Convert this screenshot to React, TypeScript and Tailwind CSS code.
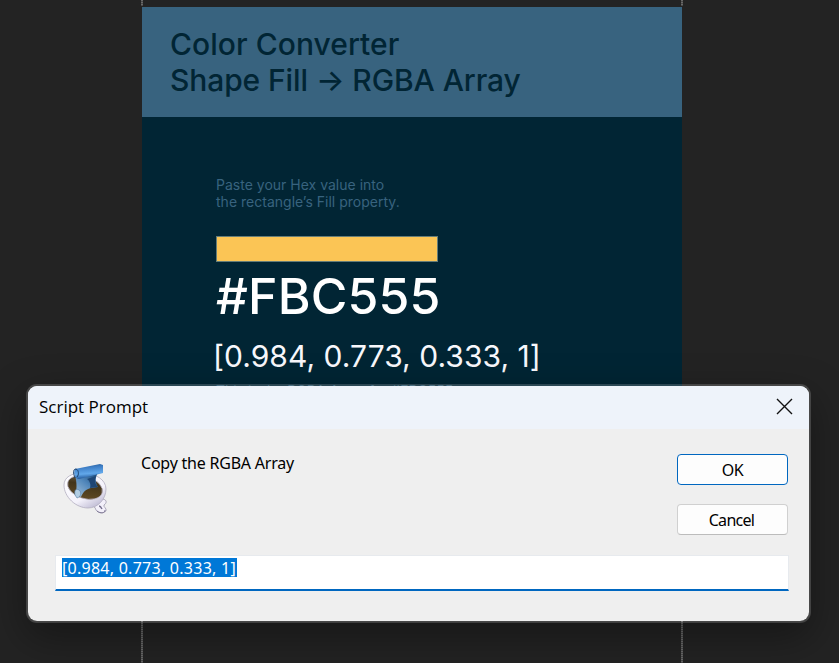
import React from "react";

function CoffeeScriptIcon() {
  return (
    <svg className="block h-[56px] w-[52px]" viewBox="0 0 52 56" aria-hidden="true">
      <defs>
        <linearGradient id="cup" x1="0" y1="0" x2="0.7" y2="1">
          <stop offset="0" stopColor="#ffffff" />
          <stop offset="0.7" stopColor="#f4f2fb" />
          <stop offset="1" stopColor="#c2bed6" />
        </linearGradient>
        <linearGradient id="coffee" x1="0" y1="0" x2="0.3" y2="1">
          <stop offset="0" stopColor="#756752" />
          <stop offset="0.45" stopColor="#43351a" />
          <stop offset="1" stopColor="#5c4723" />
        </linearGradient>
        <linearGradient id="roll" x1="0" y1="0" x2="0.15" y2="1">
          <stop offset="0" stopColor="#22558f" />
          <stop offset="0.3" stopColor="#3f80c8" />
          <stop offset="0.7" stopColor="#62a8ea" />
          <stop offset="1" stopColor="#245a9c" />
        </linearGradient>
        <linearGradient id="sheet" x1="0.9" y1="0" x2="0.1" y2="1">
          <stop offset="0" stopColor="#1b4877" />
          <stop offset="0.45" stopColor="#5086ba" />
          <stop offset="1" stopColor="#9dbdd9" />
        </linearGradient>
      </defs>
      <path d="M31 44 C36 43 38 39 43 39 C47 40 47 43 44 45 C43 47 47 48 46 51 C43 54 38 53 36 50 C35 47 34 46 31 46Z" fill="#f3f0fa" stroke="#9a96ab" strokeWidth="0.8" />
      <path d="M39 46 C40 46 41 47 42 49" fill="none" stroke="#77718e" strokeWidth="1.4" />
      <path d="M45 50 C45 53 41 54 37 51" fill="none" stroke="#77718e" strokeWidth="0.9" />
      <path d="M4 25 C4 17 12 13 22 13 C36 13 46 20 46 29 C46 39 38 48 28 48 C16 48 4 37 4 25Z" fill="url(#cup)" stroke="#b1adbf" strokeWidth="0.8" />
      <ellipse cx="25" cy="27.5" rx="18" ry="11" transform="rotate(18 25 27.5)" fill="url(#coffee)" stroke="#b9b3c3" strokeWidth="0.7" />
      <path d="M15 15 L38 13 C35 17 35 23 38 27 L31 28 C26 29 23 32 21 37 L15 35 C17 30 17 23 15 15Z" fill="url(#sheet)" />
      <path d="M27 19 L36 16 C34 20 35 24 38 27 L30 28 C31 25 30 21 27 19Z" fill="#1f4674" />
      <path d="M15 35 C14 30 16 28 19 30 C22 32 21 37 17 38Z" fill="#b2cde3" stroke="#527ca5" strokeWidth="0.6" />
      <path d="M15 9 L40 4 L43 5 L43 13 L19 19 C15 19 13 13 15 9Z" fill="url(#roll)" />
      <path d="M15 18 C13 13 13 9 16 9 C19 10 19 15 17 17" fill="none" stroke="#1b406c" strokeWidth="1" />
    </svg>
  );
}

function Guide() {
  return <div className="w-[2px] shrink-0 bg-[repeating-linear-gradient(to_bottom,#686868_0_1px,#484848_1px_2px)]" />;
}

function Canvas() {
  return (
    <div className="flex h-[663px] flex-col">
      <div className="ml-[141px] flex h-[6px] w-[542px] justify-between">
        <Guide />
        <Guide />
      </div>
      <div className="mt-px ml-[142px] h-[540px] w-[540px] bg-[#012534] font-['Inter',sans-serif]">
        <header className="h-[110px] bg-[#38637f] pt-[19px] pl-[28px]">
          <h1 className="text-[30px] leading-[36px] font-medium whitespace-nowrap text-[#012534]">
            <span className="block tracking-[0.05px]">Color Converter</span>
            <span className="block tracking-[-0.1px]">Shape Fill → RGBA Array</span>
          </h1>
        </header>
        <section className="pt-[59px] pl-[74px]">
          <p className="text-[14px] leading-[17px] tracking-[0.01px] whitespace-nowrap text-[#38637f]">
            Paste your Hex value into
            <br />
            the rectangle’s Fill property.
          </p>
          <div className="mt-[26px] h-[26px] w-[222px] border border-[#657d78] bg-[#fbc555]" />
          <div className="mt-[4px] text-[50px] leading-[60px] font-medium tracking-[0.15px] whitespace-nowrap text-white">#FBC555</div>
          <div className="-ml-[3px] mt-[12px] text-[30px] leading-[36px] tracking-[0.05px] whitespace-nowrap text-[#f8f8fc]">[0.984, 0.773, 0.333, 1]</div>
          <p className="mt-[8px] text-[14px] leading-[17px] tracking-[-0.03px] whitespace-nowrap text-[#2d5870]">This is the RGBA Array for #FBC555</p>
        </section>
      </div>
      <div className="ml-[141px] flex w-[542px] grow justify-between">
        <Guide />
        <Guide />
      </div>
    </div>
  );
}

function PromptDialog() {
  return (
    <div className="absolute top-[384px] left-[26px] flex h-[239px] w-[785px] flex-col overflow-hidden rounded-[11px] border-2 border-[#ffffff2b] bg-[#efefef] bg-clip-padding font-['Noto_Sans',sans-serif] text-black shadow-[0_14px_40px_rgba(0,0,0,0.36)]">
      <div className="flex h-[43px] shrink-0 items-center justify-between bg-[#eef3fa] pr-[16px] pb-[2px] pl-[11px]">
        <span className="font-['Open_Sans',sans-serif] text-[17px] leading-[24px]">Script Prompt</span>
        <svg className="h-[17px] w-[17px]" viewBox="0 0 17 17" aria-hidden="true">
          <path d="M1 1 L16 16 M16 1 L1 16" stroke="#111" strokeWidth="1.4" fill="none" />
        </svg>
      </div>
      <div className="flex h-[126px] shrink-0 pl-[32px]">
        <div className="w-[81px] pt-[31px]">
          <CoffeeScriptIcon />
        </div>
        <p className="w-[536px] pt-[23px] text-[16px] leading-[22px] tracking-[-0.22px]">Copy the RGBA Array</p>
        <div className="flex flex-col gap-[19px] pt-[25px]">
          <button className="h-[31px] w-[111px] rounded-[4px] border border-[#0067c0] bg-[#fdfdfd] text-[16px] leading-[22px] tracking-[-0.5px]">OK</button>
          <button className="h-[31px] w-[111px] rounded-[4px] border border-[#d0d0d0] border-b-[#bcbcbc] bg-[#fdfdfd] pr-[2px] text-[16px] leading-[22px] tracking-[-0.7px]">Cancel</button>
        </div>
      </div>
      <div className="ml-[27px] h-[36px] w-[734px] border border-b-2 border-[#e7eaee] border-b-[#0067c0] bg-white pt-[2px] pl-[6px]">
        <span className="block h-[19px] w-[175px] bg-[#0078d7] text-[16px] leading-[21px] tracking-[0.26px] whitespace-nowrap text-white">[0.984, 0.773, 0.333, 1]</span>
      </div>
    </div>
  );
}

export default function App() {
  return (
    <main className="relative h-[663px] w-[839px] overflow-hidden bg-[#232323]">
      <Canvas />
      <PromptDialog />
    </main>
  );
}
